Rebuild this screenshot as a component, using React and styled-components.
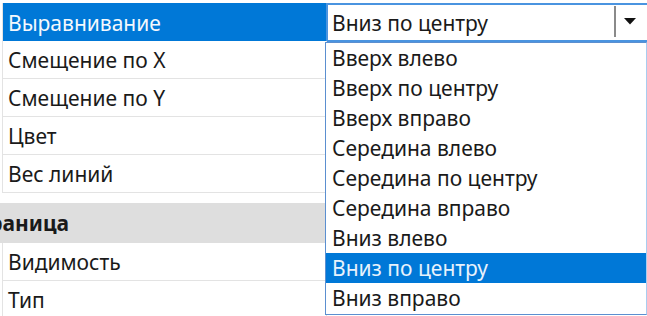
import React from 'react'
import styled, { createGlobalStyle } from 'styled-components'

const GlobalStyle = createGlobalStyle`
  html, body {
    margin: 0;
    padding: 0;
    background: #fff;
    overflow: hidden;
  }
  body {
    font-family: "Noto Sans", "Open Sans", sans-serif;
  }
`

const options = [
  'Вверх влево',
  'Вверх по центру',
  'Вверх вправо',
  'Середина влево',
  'Середина по центру',
  'Середина вправо',
  'Вниз влево',
  'Вниз по центру',
  'Вниз вправо',
]

const selectedOption = 'Вниз по центру'

const rowsTop = ['Смещение по X', 'Смещение по Y', 'Цвет', 'Вес линий']
const rowsBottom = ['Видимость', 'Тип']

export default function App() {
  return (
    <Page>
      <GlobalStyle />
      <Grid>
        <Row>
          <NameCell selected>Выравнивание</NameCell>
          <Combo>
            <ComboText>{ selectedOption }</ComboText>
            <ComboButton>
              <svg width="12" height="7" viewBox="0 0 12 7">
                <path d="M0 0 L12 0 L6 6.5 Z" fill="#111"/>
              </svg>
            </ComboButton>
          </Combo>
        </Row>
        { rowsTop.map( name => (
          <Row key={ name }>
            <NameCell>{ name }</NameCell>
            <ValueCell/>
          </Row>
        ) ) }
        <Category>Граница</Category>
        { rowsBottom.map( name => (
          <Row key={ name }>
            <NameCell>{ name }</NameCell>
            <ValueCell/>
          </Row>
        ) ) }
      </Grid>
      <List>
        { options.map( opt => (
          <Item key={ opt } selected={ opt === selectedOption }>{ opt }</Item>
        ) ) }
      </List>
    </Page>
  )
}

const Page = styled.div`
  position: relative;
  width: 647px;
  height: 316px;
  overflow: hidden;
  padding-top: 3px;
  box-sizing: border-box;
  color: #1a1a1a;
  font-size: 21px;
`
const Grid = styled.div`
  display: flex;
  flex-direction: column;
  padding-left: 2px;
`
const Row = styled.div`
  display: grid;
  grid-template-columns: 323px 330px;
  height: 38px;
  flex-shrink: 0;
  box-sizing: border-box;
  border-bottom: 1px solid #e3e3e3;
  border-left: 1px solid #e3e3e3;
`
const NameCell = styled.div`
  display: flex;
  align-items: center;
  padding-left: 5px;
  background: ${ p => p.selected ? '#0078d7' : '#fff' };
  color: ${ p => p.selected ? '#f4f8fd' : '#1a1a1a' };
  white-space: nowrap;
`
const ValueCell = styled.div`
  border-left: 1px solid #e3e3e3;
`
const Combo = styled.div`
  display: flex;
  align-items: stretch;
  height: 39px;
  box-sizing: border-box;
  border: 2px solid #4a94e0;
  border-right-width: 0;
  background: #fff;
  width: 322px;
`
const ComboText = styled.div`
  flex: 1;
  display: flex;
  align-items: center;
  padding-left: 4px;
`
const ComboButton = styled.div`
  width: 34px;
  box-sizing: border-box;
  margin: 1px 0 3px;
  padding-left: 8px;
  border-left: 2px solid #8a8a8a;
  display: flex;
  align-items: center;
`
const Category = styled.div`
  margin: 10px 0 0 -2px;
  height: 40px;
  flex-shrink: 0;
  background: #dedede;
  display: flex;
  align-items: center;
  font-weight: 700;
  text-indent: -22px;
  white-space: nowrap;
  overflow: hidden;
`
const List = styled.div`
  position: absolute;
  left: 325px;
  top: 42px;
  width: 322px;
  height: 273px;
  box-sizing: border-box;
  border: 1px solid #5b8fd0;
  border-right-color: #a8cdf0;
  background: #fff;
  display: flex;
  flex-direction: column;
`
const Item = styled.div`
  height: 30px;
  flex-shrink: 0;
  display: flex;
  align-items: center;
  padding-left: 6px;
  background: ${ p => p.selected ? '#0078d7' : 'transparent' };
  color: ${ p => p.selected ? '#e8f2fc' : '#1a1a1a' };
  white-space: nowrap;
`
